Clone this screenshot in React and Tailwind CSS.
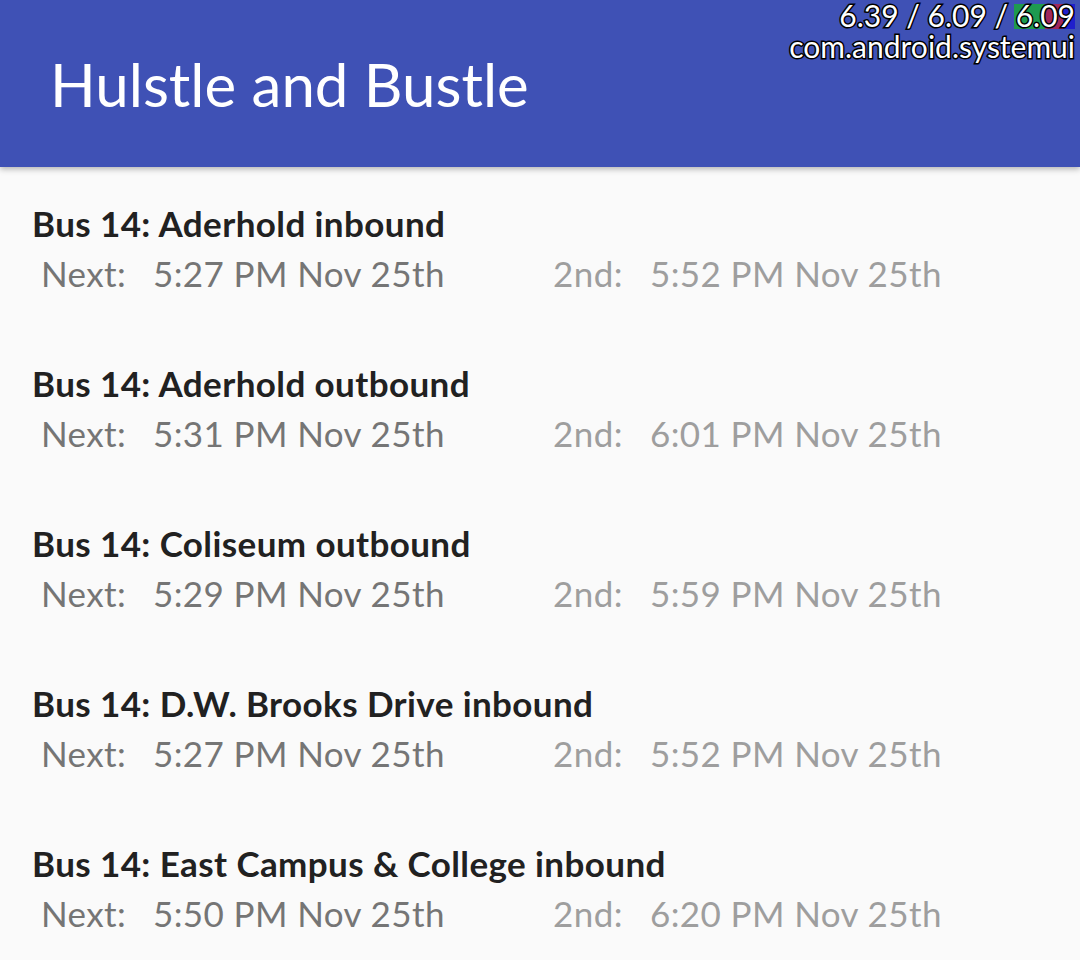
import React from "react";

const rows = [
  ["Bus 14: Aderhold inbound", "5:27 PM Nov 25th", "5:52 PM Nov 25th"],
  ["Bus 14: Aderhold outbound", "5:31 PM Nov 25th", "6:01 PM Nov 25th"],
  ["Bus 14: Coliseum outbound", "5:29 PM Nov 25th", "5:59 PM Nov 25th"],
  ["Bus 14: D.W. Brooks Drive inbound", "5:27 PM Nov 25th", "5:52 PM Nov 25th"],
  ["Bus 14: East Campus & College inbound", "5:50 PM Nov 25th", "6:20 PM Nov 25th"],
];

const outline = {
  WebkitTextStroke: "3px #000",
  paintOrder: "stroke fill",
};

export default function App() {
  return (
    <div
      className="relative w-[1080px] h-[960px] overflow-hidden bg-[#fafafa]"
      style={{ fontFamily: "Lato, 'Open Sans', sans-serif" }}
    >
      <header className="relative z-10 h-[167px] bg-[#3f51b5] flex items-center pl-[50px] shadow-[0_2px_6px_rgba(0,0,0,0.3)]">
        <h1 className="text-white text-[60px] leading-[72px] font-normal">Hulstle and Bustle</h1>
      </header>

      <div className="absolute right-[5px] top-[0px] z-20 flex flex-col items-end text-white text-[30px] leading-[30px]">
        <div className="flex items-center">
          <span style={outline}>6.39 / 6.09 /&nbsp;</span>
          <span className="relative">
            <span className="absolute left-[-2px] top-[4px] h-[25px] w-[31px] bg-[#1e9a50]" />
            <span className="absolute left-[29px] top-[4px] h-[25px] w-[18px] bg-[#a0285c]" />
            <span className="absolute left-[47px] top-[4px] h-[25px] w-[12px] bg-[#2020cc]" />
            <span className="relative" style={outline}>6.09</span>
          </span>
        </div>
        <div className="mt-[1px]" style={outline}>com.android.systemui</div>
      </div>

      <main className="pt-[36px] pl-[32px]">
        {rows.map(([name, next, second]) => (
          <div key={name} className="h-[160px]">
            <div className="text-[35px] leading-[40px] font-bold tracking-[0.4px] text-[#212121]">{name}</div>
            <div className="mt-[8px] flex text-[35px] leading-[44px] tracking-[0.4px] pl-[9px]">
              <span className="w-[112px] text-[#757575]">Next:</span>
              <span className="w-[400px] text-[#757575]">{next}</span>
              <span className="w-[97px] text-[#9e9e9e]">2nd:</span>
              <span className="text-[#9e9e9e]">{second}</span>
            </div>
          </div>
        ))}
      </main>
    </div>
  );
}
